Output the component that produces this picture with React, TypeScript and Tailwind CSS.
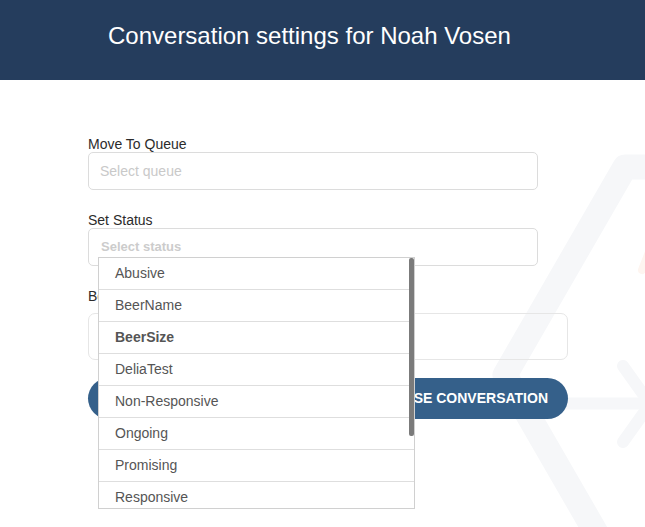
const statuses = [
  "Abusive",
  "BeerName",
  "BeerSize",
  "DeliaTest",
  "Non-Responsive",
  "Ongoing",
  "Promising",
  "Responsive",
];

const Watermark = () => (
  <svg
    className="absolute inset-0 z-0 pointer-events-none"
    width={645}
    height={447}
    viewBox="0 80 645 447"
    fill="none"
  >
    <path
      d="M 690 167 L 625 167 L 505 375 L 625 583"
      stroke="#f6f7f9"
      strokeWidth={25}
      strokeLinejoin="round"
    />
    <path d="M 520 403.5 L 642 403.5" stroke="#f6f7f9" strokeWidth={12} strokeLinecap="round" />
    <path
      d="M 623 366 L 650 404 L 623 442"
      stroke="#f6f7f9"
      strokeWidth={12}
      strokeLinecap="round"
      strokeLinejoin="round"
    />
    <line x1={649} y1={252} x2={642} y2={270} stroke="#fef5f0" strokeWidth={8} strokeLinecap="round" />
  </svg>
);

const Field = ({ label, children }: { label: string; children: React.ReactNode }) => (
  <div className="flex flex-col">
    <label className="text-[14px] leading-4 text-[#2b2b2b]">{label}</label>
    {children}
  </div>
);

const App = () => {
  return (
    <div className="w-[645px] h-[527px] overflow-hidden bg-white font-['Liberation_Sans',Arial,sans-serif]">
      <header className="h-20 bg-[#253d5d] flex items-center pb-2 pl-[108px]">
        <h1 className="text-[24px] text-white">Conversation settings for Noah Vosen</h1>
      </header>

      <main className="relative isolate h-[447px]">
        <Watermark />

        <div className="relative z-10 pl-[88px] pt-[56px] w-[568px] flex flex-col">
          <Field label="Move To Queue">
            <div className="h-[38px] w-[450px] rounded-[5px] border border-[#dcdcdc] px-[11px] flex items-center text-[14px] text-[#c9c9c9]">
              Select queue
            </div>
          </Field>

          <div className="mt-[22px]">
            <Field label="Set Status">
              <div className="relative">
                <div className="h-[38px] w-[450px] rounded-[5px] border border-[#dcdcdc] px-[12px] flex items-center text-[13px] font-bold text-[#cccccc]">
                  Select status
                </div>

                {/* open status list */}
                <div className="absolute left-[10px] top-[29px] z-20 w-[317px] h-[252px] bg-white border border-[#d0d0d0] overflow-hidden">
                  <ul>
                    {statuses.map((s) => (
                      <li
                        key={s}
                        className={
                          "h-[32px] border-b border-[#dedede] pl-4 flex items-center text-[14px] text-[#555555] " +
                          (s === "BeerSize" ? "font-bold" : "")
                        }
                      >
                        {s}
                      </li>
                    ))}
                  </ul>
                  <div className="absolute right-0 top-0 w-[5px] h-[178px] rounded-[2px] bg-[#7b7b7b]" />
                </div>
              </div>
            </Field>
          </div>

          <div className="mt-[22px]">
            <Field label="Beer Note">
              <div className="mt-[9px] h-[47px] w-[480px] rounded-[7px] border border-[#e6e6e6]" />
            </Field>
          </div>

          <div className="mt-[18px] w-[480px] flex gap-[10px]">
            <button className="flex-1 h-[41px] rounded-full bg-[#35608a] text-white text-[14px] font-bold">
              SAVE
            </button>
            <button className="h-[41px] px-5 rounded-full bg-[#35608a] text-white text-[14px] font-bold">
              CLOSE CONVERSATION
            </button>
          </div>
        </div>
      </main>
    </div>
  );
};

export default App;
